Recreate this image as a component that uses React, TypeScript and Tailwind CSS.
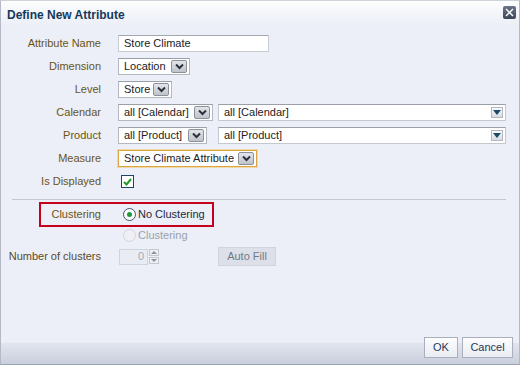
const label = "text-right text-[11px] text-[#6a5418] whitespace-nowrap";

function Chevron() {
  return (
    <svg width="9" height="7" viewBox="0 0 9 7">
      <polyline points="1,1.5 4.5,5 8,1.5" fill="none" stroke="#2b323c" strokeWidth="2" />
    </svg>
  );
}

function Select({ value, w, focused }: { value: string; w: string; focused?: boolean }) {
  return (
    <div
      className={`${w} h-[17px] flex items-center justify-between bg-white pl-[5px] pr-[2px] border ${
        focused ? "border-[#d9a441] ring-1 ring-[#f1d9a6]" : "border-[#b4b8c0] border-t-[#9ba0a8]"
      }`}
    >
      <span className="text-[11px] text-[#1c1c1c] whitespace-nowrap leading-none">{value}</span>
      <span className="w-[16px] h-[13px] flex items-center justify-center rounded-[2px] border border-[#8c9199] bg-[linear-gradient(#e3e5ea,#bfc3cb)]">
        <Chevron />
      </span>
    </div>
  );
}

function WideSelect({ value }: { value: string }) {
  return (
    <div className="flex-1 h-[17px] flex items-center justify-between bg-white pl-[5px] pr-[2px] border border-[#c4c8cf] border-t-[#9ba0a8]">
      <span className="text-[11px] text-[#1c1c1c] whitespace-nowrap leading-none">{value}</span>
      <span className="w-[12px] h-[11px] flex items-center justify-center border border-[#b3b8c0] bg-[linear-gradient(#fbfbfc,#d8dce2)]">
        <svg width="8" height="5" viewBox="0 0 8 5">
          <polygon points="0,0 8,0 4,5" fill="#1d4a66" />
        </svg>
      </span>
    </div>
  );
}

function Radio({ checked, disabled }: { checked?: boolean; disabled?: boolean }) {
  return (
    <span
      className={`w-[13px] h-[13px] rounded-full flex items-center justify-center border ${
        disabled ? "border-[#d3d6dc] bg-[#eef0f5]" : "border-[#3f556d] bg-white"
      }`}
    >
      {checked && <span className="w-[5px] h-[5px] rounded-full bg-[#1f9a3a]" />}
    </span>
  );
}

export default function App() {
  return (
    <div className="w-[520px] h-[365px] flex flex-col bg-[#eceff7] border border-[#b3b9c6] border-t-[#cdd1da] border-b-[#9aa2b2] font-['Liberation_Sans',Arial,sans-serif] overflow-hidden">
      {/* title */}
      <div className="h-[25px] flex items-start justify-between pl-[6px] pr-[3px] bg-[linear-gradient(#fdfdfe,#f2f4f9_60%,#eceff7)]">
        <span className="mt-[5px] text-[12px] font-bold text-[#15395a]">Define New Attribute</span>
        <span className="mt-[5px] w-[13px] h-[13px] rounded-[2px] flex items-center justify-center bg-[linear-gradient(#6b7487,#3c465a)]">
          <svg width="9" height="9" viewBox="0 0 9 9">
            <path d="M1 1L8 8M8 1L1 8" stroke="white" strokeWidth="1.4" />
          </svg>
        </span>
      </div>

      {/* body */}
      <div className="flex-1 flex flex-col pt-[6px]">
        <div className="grid grid-cols-[100px_1fr] auto-rows-[23px] gap-x-[17px] items-center pr-[13px]">
          <span className={label}>Attribute Name</span>
          <div className="w-[151px] h-[17px] flex items-center bg-white pl-[5px] border border-[#c8ccd3] border-t-[#a3a8b0]">
            <span className="text-[11px] text-[#1c1c1c] leading-none">Store Climate</span>
          </div>

          <span className={label}>Dimension</span>
          <Select value="Location" w="w-[72px]" />

          <span className={label}>Level</span>
          <Select value="Store" w="w-[54px]" />

          <span className={label}>Calendar</span>
          <div className="flex items-center">
            <div className="w-[100px]">
              <Select value="all [Calendar]" w="w-[95px]" />
            </div>
            <WideSelect value="all [Calendar]" />
          </div>

          <span className={label}>Product</span>
          <div className="flex items-center">
            <div className="w-[100px]">
              <Select value="all [Product]" w="w-[89px]" />
            </div>
            <WideSelect value="all [Product]" />
          </div>

          <span className={label}>Measure</span>
          <Select value="Store Climate Attribute" w="w-[139px]" focused />

          <span className={label}>Is Displayed</span>
          <span className="ml-[3px] w-[13px] h-[13px] flex items-center justify-center bg-white border border-[#1f4468]">
            <svg width="9" height="8" viewBox="0 0 9 8">
              <polyline points="1,4 3.5,6.5 8,1" fill="none" stroke="#259a2b" strokeWidth="2" />
            </svg>
          </span>
        </div>

        <div className="mt-[6px] mb-[4px] ml-[11px] mr-[13px] border-t border-[#c2c7d1]" />

        <div className="relative grid grid-cols-[100px_1fr] auto-rows-[21px] gap-x-[17px] items-center pr-[13px]">
          <span className={label}>Clustering</span>
          <div className="flex items-center gap-[2px] ml-[5px]">
            <Radio checked />
            <span className="text-[11px] text-[#1f2a3a]">No Clustering</span>
          </div>

          <span />
          <div className="flex items-center gap-[2px] ml-[5px]">
            <Radio disabled />
            <span className="text-[11px] text-[#9aa1ad]">Clustering</span>
          </div>

          <span className="text-right text-[11px] text-[#5a4a2a] whitespace-nowrap">Number of clusters</span>
          <div className="flex items-center">
            <div className="w-[100px] flex items-center pl-[1px]">
              <div className="w-[29px] h-[16px] flex items-center justify-end pr-[3px] border border-[#cfd3da] bg-[#e9ecf3]">
                <span className="text-[11px] text-[#a3aab8] leading-none">0</span>
              </div>
              <div className="flex flex-col gap-[1px] ml-[1px]">
                <span className="w-[10px] h-[7px] flex items-center justify-center border border-[#c3c8d1] bg-[#eef0f4]">
                  <svg width="6" height="3" viewBox="0 0 6 3"><polygon points="0,3 6,3 3,0" fill="#8b93a3" /></svg>
                </span>
                <span className="w-[10px] h-[7px] flex items-center justify-center border border-[#c3c8d1] bg-[#eef0f4]">
                  <svg width="6" height="3" viewBox="0 0 6 3"><polygon points="0,0 6,0 3,3" fill="#8b93a3" /></svg>
                </span>
              </div>
            </div>
            <span className="w-[58px] h-[19px] flex items-center justify-center border border-[#d0d4dc] bg-[#dde0e8] text-[11px] text-[#727a8a]">
              Auto Fill
            </span>
          </div>

          {/* annotation box */}
          <div className="absolute left-[38px] top-[-2px] w-[175px] h-[25px] border-2 border-[#c4001c] pointer-events-none" />
        </div>
      </div>

      {/* footer */}
      <div className="h-[32px] flex items-start justify-end gap-[4px] pr-[6px] pt-[5px] bg-[linear-gradient(#eceff7_0,#eceff7_10px,#e2e5ee_11px,#c9cfdc_100%)]">
        <span className="w-[34px] h-[21px] flex items-center justify-center border border-[#a9b0bb] bg-[linear-gradient(#fdfdfe,#e9ecf2)] text-[11px] text-[#1d3a5c]">
          OK
        </span>
        <span className="w-[51px] h-[21px] flex items-center justify-center border border-[#a9b0bb] bg-[linear-gradient(#fdfdfe,#e9ecf2)] text-[11px] text-[#1d3a5c]">
          Cancel
        </span>
      </div>
    </div>
  );
}
